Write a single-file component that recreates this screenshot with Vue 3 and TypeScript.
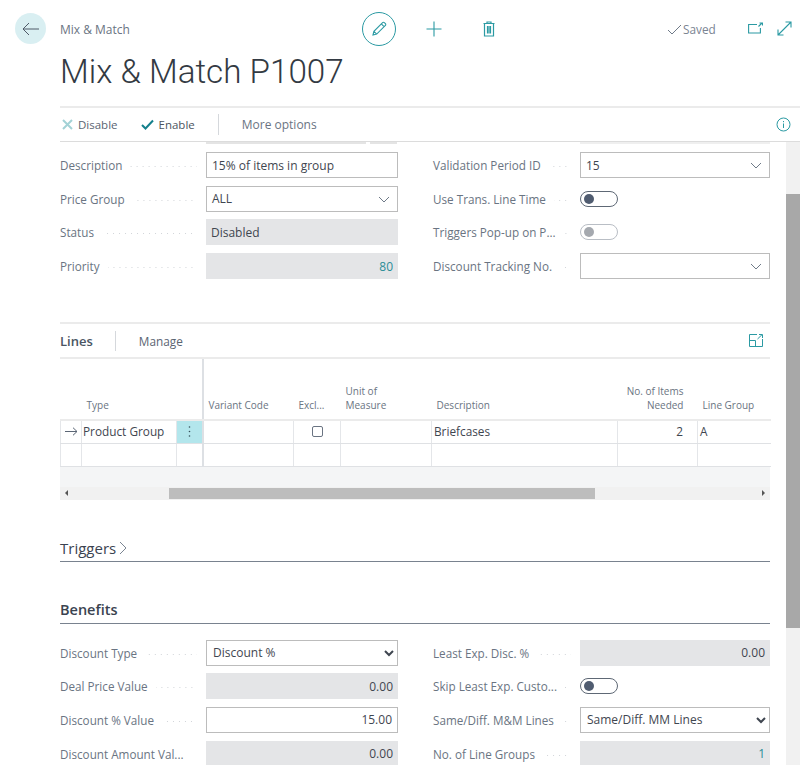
<script setup lang="ts">
type Field = { label: string; kind: 'text' | 'combo' | 'ro' | 'toggle' | 'select' | 'empty'; value?: string; align?: 'right'; link?: boolean; muted?: boolean; input?: boolean }

const generalLeft: Field[] = [
  { label: 'Description', kind: 'text', value: '15% of items in group' },
  { label: 'Price Group', kind: 'combo', value: 'ALL' },
  { label: 'Status', kind: 'ro', value: 'Disabled' },
  { label: 'Priority', kind: 'ro', value: '80', align: 'right', link: true },
]
const generalRight: Field[] = [
  { label: 'Validation Period ID', kind: 'combo', value: '15' },
  { label: 'Use Trans. Line Time', kind: 'toggle' },
  { label: 'Triggers Pop-up on P...', kind: 'toggle', muted: true },
  { label: 'Discount Tracking No.', kind: 'combo', value: '' },
]
const benefitsLeft: Field[] = [
  { label: 'Discount Type', kind: 'select', value: 'Discount %' },
  { label: 'Deal Price Value', kind: 'ro', value: '0.00', align: 'right' },
  { label: 'Discount % Value', kind: 'text', value: '15.00', align: 'right' },
  { label: 'Discount Amount Val...', kind: 'ro', value: '0.00', align: 'right' },
]
const benefitsRight: Field[] = [
  { label: 'Least Exp. Disc. %', kind: 'ro', value: '0.00', align: 'right' },
  { label: 'Skip Least Exp. Custo...', kind: 'toggle' },
  { label: 'Same/Diff. M&M Lines', kind: 'select', value: 'Same/Diff. MM Lines' },
  { label: 'No. of Line Groups', kind: 'ro', value: '1', align: 'right', link: true },
]
const generalColumns = [generalLeft, generalRight]
const benefitColumns = [benefitsLeft, benefitsRight]
</script>

<template>
  <div class="page">
    <header class="top">
      <button class="back" aria-label="Back">
        <svg width="18" height="14" viewBox="0 0 18 14" fill="none" stroke="#4f5a68" stroke-width="1"><path d="M1 7h16M7 1 1 7l6 6" /></svg>
      </button>
      <span class="crumb">Mix &amp; Match</span>
      <button class="edit" aria-label="Edit">
        <svg width="18" height="18" viewBox="0 0 18 18" fill="none" stroke="#2b9aa3" stroke-width="1.1"><path d="M3 15l.9-3.7L12.6 2.6a1.2 1.2 0 0 1 1.7 0l1.1 1.1a1.2 1.2 0 0 1 0 1.7L6.700 14.100zM3.900 11.300l2.800 2.800M11.300 3.900l2.800 2.800" /></svg>
      </button>
      <svg class="plus" width="16" height="16" viewBox="0 0 16 16" stroke="#2b9aa3" stroke-width="1.1"><path d="M8 .5v15M.5 8h15" /></svg>
      <svg class="trash" width="12" height="16" viewBox="0 0 12 16" fill="none" stroke="#2b9aa3" stroke-width="1.2"><path d="M.5 2.500h11M4 2.500V1h4v1.500M1.500 2.500v12.500h9V2.500M4.500 5v7.500M6 5v7.500M7.500 5v7.500" /></svg>
      <span class="saved">
        <svg width="15" height="11" viewBox="0 0 15 11" fill="none" stroke="#6f7a88" stroke-width="1"><path d="M1 6l4 4 9-9" /></svg>
        Saved
      </span>
      <svg class="open" width="15" height="12" viewBox="0 0 15 12" fill="none" stroke="#2b9aa3" stroke-width="1.1"><path d="M9 2.500H.6v8.500h11.800V6M10.500 4.500 14 1M11.500 1H14.500V3.500" /></svg>
      <svg class="grow" width="15" height="15" viewBox="0 0 15 15" fill="none" stroke="#2b9aa3" stroke-width="1.1"><path d="M1 14 14 1M8.500 1H14v5.500M1 8.500V14h5.500" /></svg>
    </header>

    <h1 class="title">Mix &amp; Match P1007</h1>

    <nav class="actions">
      <span class="action">
        <svg width="11" height="11" viewBox="0 0 11 11" stroke="#a3d2d6" stroke-width="2"><path d="M1 1l9 9M10 1l-9 9" /></svg>
        Disable
      </span>
      <span class="action enable">
        <svg width="13" height="11" viewBox="0 0 13 11" fill="none" stroke="#14808c" stroke-width="2"><path d="M1 6l3.500 3.500L12 1.500" /></svg>
        Enable
      </span>
      <span class="divider"></span>
      <span class="action more">More options</span>
      <svg class="info" width="15" height="15" viewBox="0 0 15 15" fill="none" stroke="#2b9aa3" stroke-width="1"><circle cx="7.500" cy="7.500" r="6.500" /><path d="M7.500 6.500v4.500M7.500 4v1.200" /></svg>
    </nav>

    <div class="body">
      <main class="main">
        <div class="stub">
          <span class="stub-a"></span><span class="stub-b"></span><span class="stub-c"></span>
        </div>

        <section class="form general">
          <div v-for="(col, i) in generalColumns" :key="i" class="col">
            <div v-for="f in col" :key="f.label" class="row">
              <span class="label"><span class="label-text">{{ f.label }}</span><span class="dots"></span></span>
              <span v-if="f.kind === 'toggle'" class="toggle" :class="{ muted: f.muted }"><i></i></span>
              <span v-else class="field" :class="[f.kind, f.align, { link: f.link }]">
                {{ f.value }}
                <svg v-if="f.kind === 'combo'" class="chev" width="12" height="7" viewBox="0 0 12 7" fill="none" stroke="#6f7a88" stroke-width="1"><path d="M1 1l5 5 5-5" /></svg>
              </span>
            </div>
          </div>
        </section>

        <section class="lines">
          <div class="lines-bar">
            <strong class="lines-title">Lines</strong>
            <span class="lines-div"></span>
            <span class="manage">Manage</span>
            <svg class="lines-exp" width="14" height="13" viewBox="0 0 14 13" fill="none" stroke="#2b9aa3" stroke-width="1"><path d="M8 .5H.5v12h13V5M.5 6.500h6v6M8.500 5 13 .7M10 .5h3.500V4" /></svg>
          </div>

          <table class="grid">
            <colgroup>
              <col style="width: 21px" /><col style="width: 95px" /><col style="width: 26px" />
              <col style="width: 91px" /><col style="width: 47px" /><col style="width: 91px" />
              <col style="width: 186px" /><col style="width: 80px" /><col style="width: 73px" />
            </colgroup>
            <thead>
              <tr>
                <th></th><th>Type</th><th class="frozen"></th>
                <th>Variant Code</th><th>Excl...</th><th>Unit of<br />Measure</th>
                <th>Description</th><th class="num">No. of Items<br />Needed</th><th>Line Group</th>
              </tr>
            </thead>
            <tbody>
              <tr>
                <td class="arrow">
                  <svg width="13" height="9" viewBox="0 0 13 9" fill="none" stroke="#5b6675" stroke-width="1"><path d="M0 4.500h12M8 .7l4 3.800-4 3.800" /></svg>
                </td>
                <td class="type">Product Group</td>
                <td class="menu frozen">
                  <svg width="3" height="11" viewBox="0 0 3 11" fill="#37505a"><circle cx="1.500" cy="1" r=".8" /><circle cx="1.500" cy="5.500" r=".8" /><circle cx="1.500" cy="10" r=".8" /></svg>
                </td>
                <td></td>
                <td class="check"><span class="box"></span></td>
                <td></td>
                <td>Briefcases</td>
                <td class="num">2</td>
                <td>A</td>
              </tr>
              <tr>
                <td></td><td></td><td class="frozen"></td><td></td><td></td><td></td><td></td><td></td><td></td>
              </tr>
            </tbody>
          </table>
          <div class="grid-foot"></div>
          <div class="hscroll">
            <span class="tri left"></span>
            <span class="hthumb"></span>
            <span class="tri right"></span>
          </div>
        </section>

        <h2 class="group triggers">Triggers<svg width="8" height="14" viewBox="0 0 8 14" fill="none" stroke="#7b8592" stroke-width="1"><path d="M1 1l6 6-6 6" /></svg></h2>
        <h2 class="group benefits">Benefits</h2>

        <section class="form bottom">
          <div v-for="(col, i) in benefitColumns" :key="i" class="col">
            <div v-for="f in col" :key="f.label" class="row">
              <span class="label"><span class="label-text">{{ f.label }}</span><span class="dots"></span></span>
              <span v-if="f.kind === 'toggle'" class="toggle"><i></i></span>
              <select v-else-if="f.kind === 'select'" class="native" :aria-label="f.label">
                <option>{{ f.value }}</option>
              </select>
              <span v-else class="field" :class="[f.kind, f.align, { link: f.link }]">{{ f.value }}</span>
            </div>
          </div>
        </section>
      </main>
      <aside class="vscroll"><span class="vthumb"></span></aside>
    </div>
  </div>
</template>

<style>
html, body { margin: 0; background: #fff; overflow: hidden; }
</style>

<style scoped>
.page {
  width: 800px;
  height: 765px;
  overflow: hidden;
  background: #fff;
  font-family: "Open Sans", "Noto Sans", sans-serif;
  font-size: 12px;
  color: #3f4650;
  box-sizing: border-box;
}
button { padding: 0; background: none; border: 0; display: flex; align-items: center; justify-content: center; }

.top { height: 58px; display: flex; align-items: center; }
.back { width: 31px; height: 31px; border-radius: 50%; background: #d9eff2; margin-left: 15px; margin-top: -1px; }
.crumb { margin-left: 14px; width: 302px; color: #6a7482; font-size: 12px; }
.edit { width: 34px; height: 34px; border: 1px solid #2b9aa3; border-radius: 50%; box-sizing: border-box; }
.plus { margin-left: 30px; }
.trash { margin-left: 41px; }
.saved { margin-left: 172px; width: 67px; display: flex; align-items: center; gap: 1px; color: #7a8492; font-size: 11.800px; white-space: nowrap; }
.open { margin-left: 14px; margin-top: -2px; }
.grow { margin-left: 14px; margin-top: -2px; }

.title { margin: 0 0 0 60px; height: 48px; line-height: 27px; font-family: Roboto, "Open Sans", sans-serif; font-size: 33.200px; font-weight: 300; color: #333a43; white-space: nowrap; }

.actions {
  margin-left: 60px;
  height: 33px;
  border-top: 2px solid #ebebeb;
  border-bottom: 1px solid #dcdcdc;
  display: flex;
  align-items: center;
  color: #5a6472;
  font-size: 11.500px;
}
.action { display: flex; align-items: center; gap: 5px; }
.actions .action:first-child { margin-left: 2px; }
.enable { margin-left: 23px; color: #4b5460; }
.divider { width: 1px; height: 21px; background: #d5d8dc; margin-left: 23px; }
.more { margin-left: 23px; color: #6a7482; font-size: 12px; }
.info { margin-left: auto; margin-right: 9px; }

.body { display: flex; height: 625px; }
.main { flex: 1; padding-left: 60px; padding-right: 16px; min-width: 0; }
.vscroll { width: 14px; background: #f1f1f1; display: block; }
.vthumb { display: block; margin-top: 52px; height: 434px; background: #a8a8a8; }

.stub { height: 2px; display: flex; }
.stub-a { margin-left: 146px; width: 160px; background: #e4e4e4; }
.stub-b { margin-left: 4px; width: 27px; background: #e4e4e4; }
.stub-c { margin-left: 183px; width: 190px; background: #efefef; }

.form { display: grid; grid-template-columns: 338px 337px; column-gap: 35px; }
.general { margin-top: 8px; }
.col { display: flex; flex-direction: column; gap: 8px; }
.row { display: grid; grid-template-columns: 146px 1fr; height: 26px; align-items: center; }
.col:last-child .row { grid-template-columns: 147px 1fr; }
.col .row + .row { margin-top: -0.33px; }
.label { display: flex; align-items: center; color: #6a7482; font-size: 11.700px; padding-right: 9px; min-width: 0; white-space: nowrap; }
.dots {
  flex: 1;
  height: 1px;
  margin-left: 8px;
  margin-top: 3px;
  background-image: linear-gradient(to right, #d2d5d9 1px, transparent 1px);
  background-size: 6px 1px;
  background-position: right center;
}
.field {
  height: 26px;
  box-sizing: border-box;
  display: flex;
  align-items: center;
  padding: 0 5px;
  position: relative;
  font-size: 12px;
  color: #3f4650;
  white-space: nowrap;
}
.text, .combo { border: 1px solid #bcbcbc; background: #fff; }
.ro { background: #e4e5e7; }
.right { justify-content: flex-end; }
.link { color: #2b8d97; }
.chev { position: absolute; right: 7px; top: 9px; }
.native {
  height: 26px;
  width: 100%;
  box-sizing: border-box;
  border: 1px solid #bcbcbc;
  border-radius: 0;
  background-color: #fff;
  font: inherit;
  font-size: 12px;
  color: #3f4650;
  padding: 0 2px;
  outline: 0;
}

.toggle { width: 38px; height: 16px; border: 1px solid #5e6875; border-radius: 9px; box-sizing: border-box; display: block; padding: 2px 3px; }
.toggle i { display: block; width: 10px; height: 10px; border-radius: 50%; background: #505c70; }
.toggle.muted { border-color: #b9bec5; }
.toggle.muted i { background: #a5a9af; }

.lines { margin-top: 43px; }
.lines-bar { height: 33px; border-top: 2px solid #ebebeb; border-bottom: 2px solid #ebebeb; display: flex; align-items: center; }
.lines-title { font-weight: 600; font-size: 13px; color: #4a5563; }
.lines-div { width: 1px; height: 20px; background: #d5d8dc; margin-left: 22px; }
.manage { margin-left: 23px; font-size: 11.800px; color: #5a6472; }
.lines-exp { margin-left: auto; margin-right: 7px; }

.grid { width: 710px; table-layout: fixed; border-collapse: collapse; }
.grid th {
  height: 53px;
  vertical-align: bottom;
  padding: 0 5px 7px 5px;
  font-weight: 400;
  font-size: 10px;
  line-height: 14px;
  text-align: left;
  color: #6a7482;
  border-bottom: 2px solid #ebebeb;
  white-space: nowrap;
  overflow: hidden;
}
.grid th.frozen { padding: 0; }
.grid th.num, .grid td.num { text-align: right; padding-right: 14px; }
.grid td {
  height: 23px;
  padding: 0 2px 2px;
  font-size: 11.800px;
  color: #3f4650;
  border-right: 1px solid #e4e6e9;
  border-bottom: 1px solid #dfe1e4;
  white-space: nowrap;
  box-sizing: border-box;
}
.grid td.type { padding-left: 1px; }
.grid td:first-child { border-left: 1px solid #e4e6e9; }
.grid td:last-child { border-right: 0; }
.grid .frozen { border-right: 2px solid #dde0e4; }
.grid th.frozen { border-right: 2px solid #dde0e4; }
.grid .arrow { text-align: center; padding: 0; }
.grid .menu { background: #b3e6ec; text-align: center; padding: 0; }
.grid .menu svg, .grid .arrow svg { display: block; margin: auto; }
.check { text-align: center; }
.box { display: inline-block; width: 9px; height: 9px; border: 1px solid #6a7482; border-radius: 2px; vertical-align: -1px; }

.grid-foot { height: 20px; background: #f4f5f6; }
.hscroll { height: 13px; background: #f1f1f1; display: flex; align-items: center; position: relative; }
.hthumb { display: block; margin-left: 109px; width: 426px; height: 11px; background: #bdbdbd; }
.tri { width: 0; height: 0; border-top: 3px solid transparent; border-bottom: 3px solid transparent; position: absolute; }
.tri.left { left: 5px; border-right: 3px solid #555; }
.tri.right { right: 5px; border-left: 3px solid #555; }

.group { margin: 0; font-size: 14.500px; font-weight: 600; color: #3a4350; border-bottom: 1px solid #79828f; display: flex; align-items: center; gap: 3px; height: 22px; padding-bottom: 2px; }
.triggers { margin-top: 37px; font-size: 15px; font-weight: 500; }
.benefits { margin-top: 37px; }
.bottom { margin-top: 16px; }
</style>
